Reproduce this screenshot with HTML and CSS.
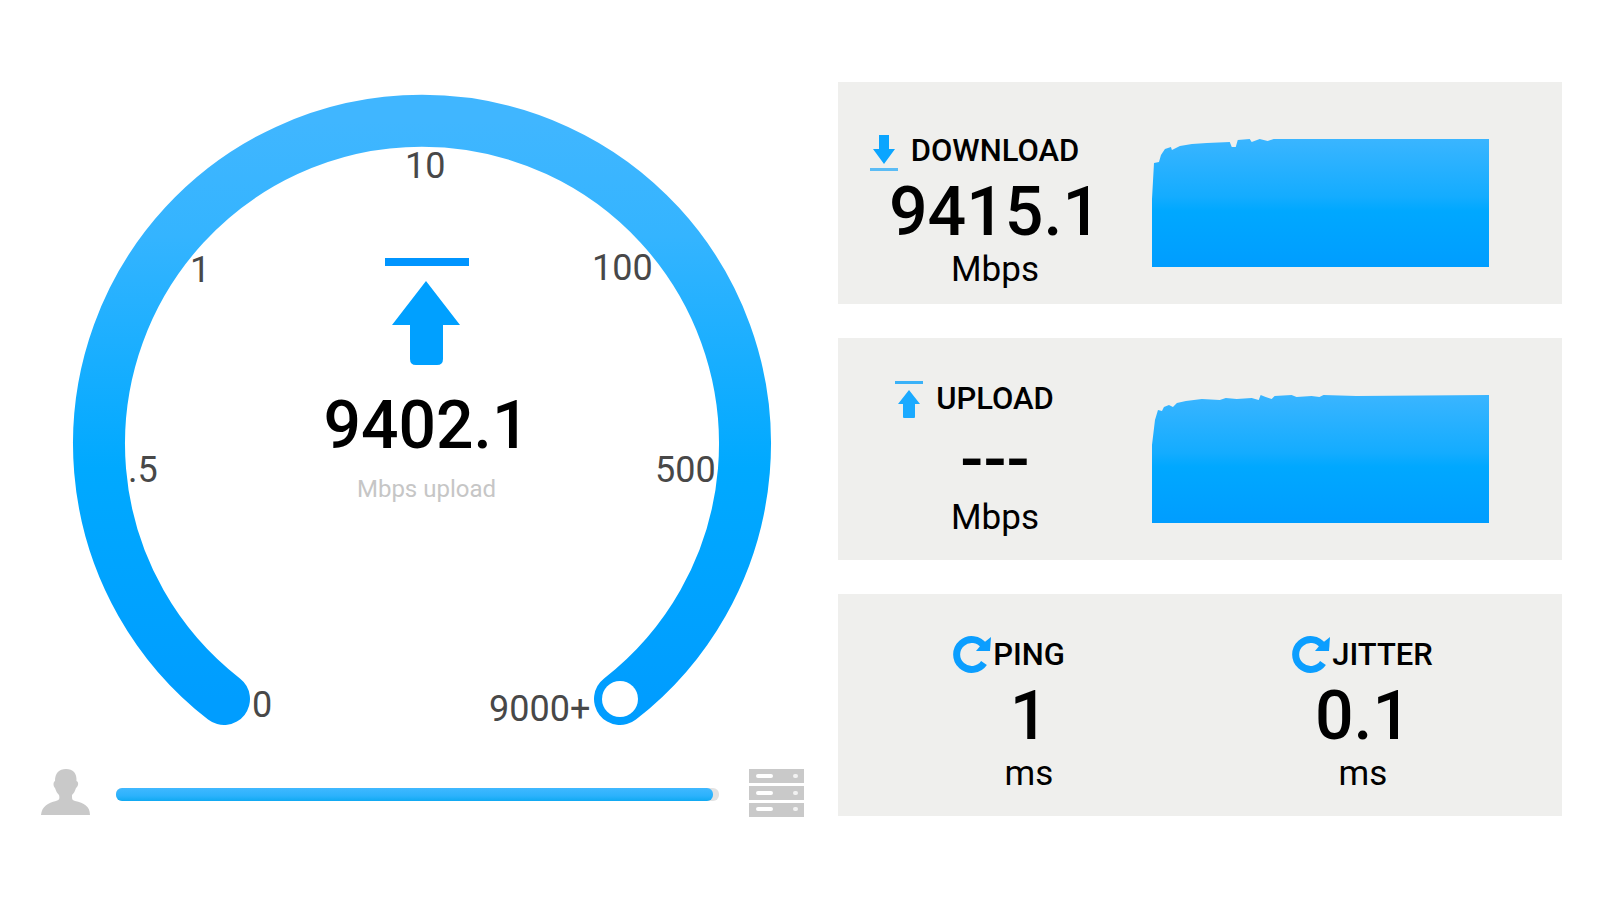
FILE: index.html
```html
<!DOCTYPE html>
<html lang="en">

<head>
    <meta charset="UTF-8">
    <meta name="viewport" content="width=device-width, initial-scale=1.0">
    <title>Speed Test</title>
    <link rel="stylesheet" href="styles.css">
</head>

<body>
    <main class="dashboard">
        <section class="test">
            <div class="gauge">
                <svg class="gauge-dial" viewBox="0 0 700 632">
                    <defs>
                        <linearGradient id="dialFill" x1="0" y1="0" x2="0" y2="1">
                            <stop offset="0" stop-color="#40b6ff" />
                            <stop offset="0.2" stop-color="#34b4ff" />
                            <stop offset="0.6" stop-color="#00a9ff" />
                            <stop offset="1" stop-color="#009dff" />
                        </linearGradient>
                    </defs>
                    <path d="M151 605 A323 323 0 1 1 547 605" fill="none" stroke="url(#dialFill)" stroke-width="52" stroke-linecap="round" />
                    <circle cx="547" cy="605" r="18" fill="#fff" />
                    <g class="scale">
                        <text x="179" y="623">0</text>
                        <text x="55" y="388">.5</text>
                        <text x="117" y="188">1</text>
                        <text x="332" y="84">10</text>
                        <text x="519" y="186">100</text>
                        <text x="582" y="388">500</text>
                        <text x="416" y="627">9000+</text>
                    </g>
                </svg>
                <div class="readout">
                    <svg width="84" height="110" viewBox="0 0 84 110">
                        <path d="M0 1h84v8H0z" fill="#0095ff" />
                        <path d="M41 24l34 44H58v34q0 6-6 6H31q-6 0-6-6V68H7z" fill="#00a0ff" />
                    </svg>
                    <div class="readout-value">9402.1</div>
                    <div class="readout-unit">Mbps upload</div>
                </div>
            </div>

            <div class="connection">
                <!-- client -->
                <svg width="50" height="52" viewBox="0 0 50 52" fill="#c9c9c9">
                    <path d="M26 1c7 0 11 4 10.500 12 2.500 1 2 5-.5 7-1 3-2 5-4 7 0 4 0 5 3 6 9 2 15 5 15 14H1c1-9 7-12 15-14 3-1 4-2 3-6-2-2-3-4-4-7-2-2-2-6 0-7C15 5 19 1 26 1z" />
                </svg>
                <div class="track">
                    <div class="track-fill"></div>
                </div>
                <!-- server -->
                <svg width="56" height="52" viewBox="0 0 56 52">
                    <path d="M0 1h55v14H0zM0 18h55v14H0zM0 35h55v14H0z" fill="#c9c9c9" />
                    <path d="M9 8h13M9 25h13M9 41h13" stroke="#fff" stroke-width="4" stroke-linecap="round" />
                    <path d="M46 8h1M46 25h1M46 41h1" stroke="#f2f2f2" stroke-width="4" stroke-linecap="round" />
                </svg>
            </div>
        </section>

        <section class="results">
            <div class="card card-speed card-download">
                <div class="metric">
                    <div class="metric-label">
                        <svg class="arrow-icon" width="28" height="42" viewBox="0 0 28 42">
                            <path d="M9 6h10v14h6L14 35 3 20h6z" fill="#0ba5ff" />
                            <path d="M0 39h28v3H0z" fill="#5bbcf5" />
                        </svg>
                        DOWNLOAD
                    </div>
                    <div class="metric-value">9415.1</div>
                    <div class="metric-unit">Mbps</div>
                </div>
                <svg class="chart" viewBox="0 0 338 128" preserveAspectRatio="none">
                    <defs>
                        <linearGradient id="chartFill" x1="0" y1="0" x2="0" y2="1">
                            <stop offset="0" stop-color="#3ab5ff" />
                            <stop offset="0.45" stop-color="#14acff" />
                            <stop offset="0.56" stop-color="#00a8ff" />
                            <stop offset="1" stop-color="#009dff" />
                        </linearGradient>
                    </defs>
                    <path d="M0 128V60L2 24 7 23 9 16 13 10 19 8 20 11 24 9 28 7 40 5 55 4 78 3 80 8 84 8 86 1 98 0 100 3 108 0 116 2 122 0H338V128z" fill="url(#chartFill)" />
                </svg>
            </div>

            <div class="card card-speed">
                <div class="metric">
                    <div class="metric-label">
                        <svg class="arrow-icon" width="28" height="42" viewBox="0 0 28 42">
                            <path d="M0 4h28v3H0z" fill="#3bb2f8" />
                            <path d="M14 13l11 14h-5v13q0 1-1 1H9q-1 0-1-1V27H3z" fill="#1baaff" />
                        </svg>
                        UPLOAD
                    </div>
                    <div class="metric-value">---</div>
                    <div class="metric-unit">Mbps</div>
                </div>
                <svg class="chart" viewBox="0 0 338 128" preserveAspectRatio="none">
                    <path d="M0 128V50L3 25 6 15 10 16 12 12 17 10 21 12 25 8 34 6 50 4 68 5 74 3 85 4 100 3 107 5 109 0 114 2 120 4 123 1 140 0 145 2 160 1 168 2 172 0 205 1 338 0V128z" fill="url(#chartFill)" />
                </svg>
            </div>

            <div class="card card-latency">
                <div class="metric">
                    <div class="metric-label">
                        <svg class="refresh-icon" width="38" height="42" viewBox="0 0 38 42">
                            <path d="M30 30A15 15 0 1 1 30 13" fill="none" stroke="#0b9eff" stroke-width="7" />
                            <path d="M37 4L36 18H22L27 12z" fill="#0b9eff" />
                        </svg>
                        PING
                    </div>
                    <div class="metric-value">1</div>
                    <div class="metric-unit">ms</div>
                </div>
                <div class="metric metric-jitter">
                    <div class="metric-label">
                        <svg class="refresh-icon" width="38" height="42" viewBox="0 0 38 42">
                            <path d="M30 30A15 15 0 1 1 30 13" fill="none" stroke="#0b9eff" stroke-width="7" />
                            <path d="M37 4L36 18H22L27 12z" fill="#0b9eff" />
                        </svg>
                        JITTER
                    </div>
                    <div class="metric-value">0.1</div>
                    <div class="metric-unit">ms</div>
                </div>
            </div>
        </section>
    </main>
</body>

</html>
```

FILE: styles.css
```css
body {
    font-family: Roboto, "Liberation Sans", sans-serif;
    margin: 0;
    background-color: #fff;
    color: #000;
}

.dashboard {
    display: grid;
    grid-template-columns: 765fr 724fr;
    gap: 33px;
    padding: 82px 38px 82px 40px;
}

svg {
    display: block;
    flex: none;
    overflow: visible;
}

/* Gauge */
.gauge {
    display: grid;
    max-width: 700px;
    margin: 12px auto 0;
}

.gauge-dial,
.readout {
    grid-area: 1 / 1;
}

.gauge-dial {
    width: 100%;
}

.scale {
    font-size: 36px;
    fill: #484848;
}

.readout {
    display: flex;
    flex-direction: column;
    align-items: center;
    padding: 163px 0 0 8px;
}

.readout-value {
    margin-top: 20px;
    font-size: 66px;
    font-weight: 500;
    line-height: 78px;
}

.readout-unit {
    margin-top: 8px;
    font-size: 24px;
    line-height: 32px;
    color: #c6c6c6;
}

/* Client to server bar */
.connection {
    display: flex;
    align-items: center;
    margin-top: 42px;
}

.track {
    flex: 1;
    margin: 0 30px 0 26px;
    border-radius: 6px;
    background: #e2e2e2;
}

.track-fill {
    width: 99%;
    height: 13px;
    border-radius: 6px;
    background: linear-gradient(#40b8ff, #2cb2fc 60%, #10aaf2);
}

/* Result cards */
.results {
    display: grid;
    gap: 34px;
    align-content: start;
}

.card {
    display: grid;
    min-height: 222px;
    background: #efefed;
}

.card-speed {
    grid-template-columns: 314px 1fr;
    padding-right: 73px;
}

.card-latency {
    grid-template-columns: 1fr 1fr;
    padding: 0 32px 0 24px;
}

.metric {
    display: flex;
    flex-direction: column;
    align-items: center;
    padding-top: 40px;
}

.card-download .metric {
    padding-top: 48px;
}

.metric-label {
    display: flex;
    align-items: center;
    height: 40px;
    font-size: 31px;
    font-weight: 500;
}

/* icons hang to the left so the label text stays centred */
.arrow-icon {
    margin: 0 13px 0 -41px;
}

.refresh-icon {
    margin: 0 1px 0 -39px;
}

.metric-jitter .refresh-icon {
    margin-left: 0;
}

.metric-value {
    margin-top: 4px;
    font-size: 68px;
    font-weight: 500;
    line-height: 76px;
}

.metric-unit {
    font-size: 35px;
    line-height: 40px;
}

.chart {
    width: 100%;
    height: 128px;
    margin-top: 57px;
}
```
